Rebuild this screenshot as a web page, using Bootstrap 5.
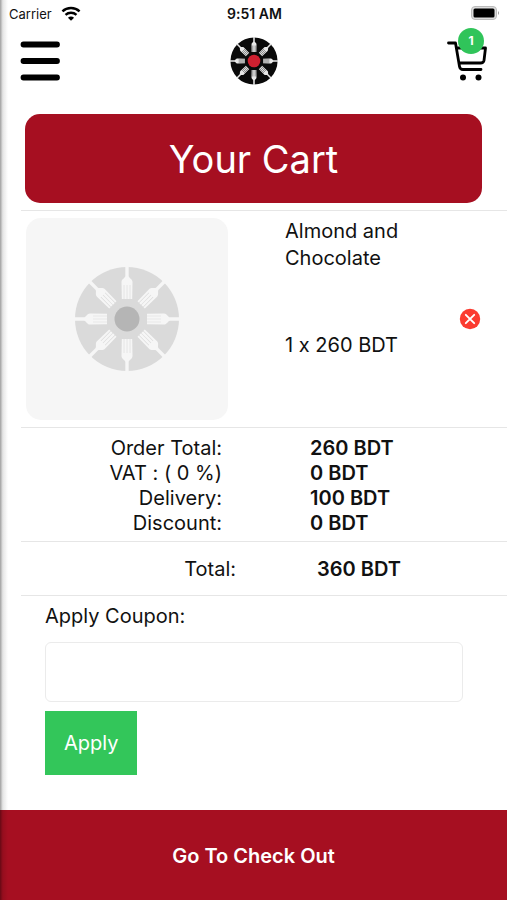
<!DOCTYPE html>
<html lang="en">
<head>
<meta charset="utf-8">
<meta name="viewport" content="width=device-width, initial-scale=1">
<title>Your Cart</title>
<link href="https://cdn.jsdelivr.net/npm/bootstrap@5.3.0/dist/css/bootstrap.min.css" rel="stylesheet">
<style>
  body { font-family: Inter, "Liberation Sans", sans-serif; font-size: 20px; line-height: 25px; color: #111; background: #fff; font-variant-ligatures: no-contextual; }
  /* shadow cast by the side drawer along the left edge */
  .screen::before { content: ""; position: absolute; inset: 0 auto 0 0; width: 8px; z-index: 5; pointer-events: none;
    background: linear-gradient(90deg, rgba(0,0,0,.38), rgba(0,0,0,.1) 35%, rgba(0,0,0,0)); }
  .status-bar { display: grid; grid-template-columns: 1fr auto 1fr; font-size: 13px; line-height: 28px; padding: 0 7px 0 9px; height: 28px; }
  .clock { font-size: 14px; }
  .top-bar { display: grid; grid-template-columns: 1fr auto 1fr; padding: 0 19px 0 20px; height: 66px; }
  .cart-link { margin-bottom: 8px; }
  .cart-count { width: 26px; height: 26px; font-size: 12px; top: -4px; right: 4px; background: #30c45a; }
  .page-title { background: #a60f21; font-size: 38px; line-height: 48px; border-radius: 15px; margin: 20px 25px 7px; padding: 21px 0 20px; }
  .sections { margin-left: 21px; }
  .sections > * { border-top: 1px solid #e6e6e6; }
  .cart-item { display: grid; grid-template-columns: 202px 1fr auto; padding: 7px 26px 7px 5px; }
  .thumb { aspect-ratio: 1; background: #f6f6f6; border-radius: 15px; }
  .item-text { padding-left: 57px; line-height: 27px; }
  .item-price { margin-top: 60px; }
  .sum-row { display: grid; grid-template-columns: 201px 1fr; column-gap: 88px; }
  .sum-row dt { font-weight: 400; text-align: right; }
  .sum-row dd { font-weight: 600; margin: 0; }
  .grand .sum-row { grid-template-columns: 215px 1fr; column-gap: 81px; }
  .totals { padding: 8px 0 5px; }
  .grand { padding: 15px 0 13px; }
  .coupon { padding: 8px 44px 0 24px; }
  .coupon-input { height: 60px; border: 1px solid #ebebeb; border-radius: 6px; margin: 13px 0 9px; font-size: 20px; }
  .apply-btn { background: #33c65a; color: #fff; border: 0; border-radius: 0; font-size: 20px; line-height: 24px; padding: 20px 19px; }
  .checkout-btn { background: #a60f21; color: #fff; border: 0; font-weight: 600; font-size: 20px; line-height: 30px; padding: 31px 0 29px; }
</style>
</head>
<body>
<svg width="0" height="0" class="position-absolute" aria-hidden="true">
  <defs>
    <g id="fork">
      <path d="M-1.7-53H1.7V-43C1.7-41 5.500-40 5.500-37L5.200-20H3.300V-34H2.700V-20H.3V-34H-.3V-20H-2.700V-34H-3.300V-20H-5.200L-5.500-37C-5.500-40-1.700-41-1.700-43Z"/>
    </g>
    <g id="forks">
      <use href="#fork"/><use href="#fork" transform="rotate(45)"/><use href="#fork" transform="rotate(90)"/><use href="#fork" transform="rotate(135)"/>
      <use href="#fork" transform="rotate(180)"/><use href="#fork" transform="rotate(225)"/><use href="#fork" transform="rotate(270)"/><use href="#fork" transform="rotate(315)"/>
    </g>
  </defs>
</svg>
<div class="screen position-relative d-flex flex-column min-vh-100">
  <div class="status-bar">
    <div class="d-flex align-items-center">
      <span>Carrier</span>
      <svg class="ms-2" width="22" height="16" viewBox="0 0 18 14" fill="none" stroke="#000" stroke-width="2.1" aria-label="Wi-Fi"><path d="M1.500 4.700C5.600.8 12.400.8 16.500 4.700M4.200 7.700C6.900 5.300 11.100 5.300 13.800 7.700"/><path d="M6.300 10.300Q9 8 11.700 10.300L9 13Z" fill="#000" stroke="none"/></svg>
    </div>
    <span class="clock fw-semibold">9:51 AM</span>
    <svg class="ms-auto mt-1" width="30" height="18" viewBox="0 0 30 18" aria-label="Battery"><rect x="1.500" y="2.500" width="25" height="13" rx="3.500" fill="#ddd" stroke="#bbb"/><rect x="3.500" y="4.500" width="21" height="9" rx="1.500"/><path d="M28 7q2 2 0 4z" fill="#999"/></svg>
  </div>
  <header class="top-bar align-items-center">
    <button class="btn p-0 border-0 lh-1 me-auto" type="button" aria-label="Menu">
      <svg class="d-block" width="41" height="40" viewBox="0 0 41 40" stroke="#000" stroke-width="5.800" stroke-linecap="round"><path d="M3.500 3.500H37M3.500 20H37M3.500 36.500H37"/></svg>
    </button>
    <a href="#" class="lh-1" aria-label="Home">
      <svg class="d-block" width="48" height="48" viewBox="-53 -53 106 106"><circle r="52" fill="#0a0a0a"/><use href="#forks" fill="#e8e8e8"/><circle r="14" fill="#cf2030"/></svg>
    </a>
    <a href="#" class="cart-link position-relative ms-auto lh-1" aria-label="Cart">
      <svg class="d-block" width="41" height="50" viewBox="0 0 41 50" fill="none" stroke="#000" stroke-width="2.800" stroke-linecap="round" stroke-linejoin="round"><path d="M1.500 11H8.500L12.500 34.500Q13 37.500 16 37.500H34M10 16H38.500L37 28.500Q36.500 31 33.500 31H12"/><circle cx="16" cy="45.500" r="3" fill="#000" stroke="none"/><circle cx="31.500" cy="45.500" r="3" fill="#000" stroke="none"/></svg>
      <span class="cart-count position-absolute rounded-circle text-white fw-bold d-flex align-items-center justify-content-center">1</span>
    </a>
  </header>
  <h1 class="page-title text-white text-center fw-normal">Your Cart</h1>
  <main class="sections">
    <section class="cart-item">
      <div class="thumb d-flex align-items-center justify-content-center">
        <svg width="106" height="106" viewBox="-53 -53 106 106" aria-hidden="true"><circle r="52" fill="#dadada"/><use href="#forks" fill="#f6f6f6"/><circle r="12.500" fill="#b5b5b5"/></svg>
      </div>
      <div class="item-text">
        <div>Almond and<br>Chocolate</div>
        <div class="item-price">1 x 260 BDT</div>
      </div>
      <button class="btn p-0 border-0 lh-1 align-self-center" type="button" aria-label="Remove item">
        <svg class="d-block" width="22" height="22" viewBox="0 0 22 22"><circle cx="11" cy="11" r="10.200" fill="#fb3b30"/><path d="M6.800 6.800 15.200 15.200M15.200 6.800 6.800 15.200" stroke="#fff" stroke-width="1.900" stroke-linecap="round"/></svg>
      </button>
    </section>
    <dl class="totals m-0">
      <div class="sum-row"><dt>Order Total:</dt><dd>260 BDT</dd></div>
      <div class="sum-row"><dt>VAT : ( 0 %)</dt><dd>0 BDT</dd></div>
      <div class="sum-row"><dt>Delivery:</dt><dd>100 BDT</dd></div>
      <div class="sum-row"><dt>Discount:</dt><dd>0 BDT</dd></div>
    </dl>
    <dl class="grand m-0">
      <div class="sum-row"><dt>Total:</dt><dd>360 BDT</dd></div>
    </dl>
    <form class="coupon">
      <label class="d-block" for="coupon">Apply Coupon:</label>
      <input class="form-control coupon-input" id="coupon" type="text">
      <button class="btn apply-btn" type="button">Apply</button>
    </form>
  </main>
  <button class="checkout-btn w-100 mt-auto" type="button">Go To Check Out</button>
</div>
<script src="https://cdn.jsdelivr.net/npm/bootstrap@5.3.0/dist/js/bootstrap.bundle.min.js"></script>
</body>
</html>
